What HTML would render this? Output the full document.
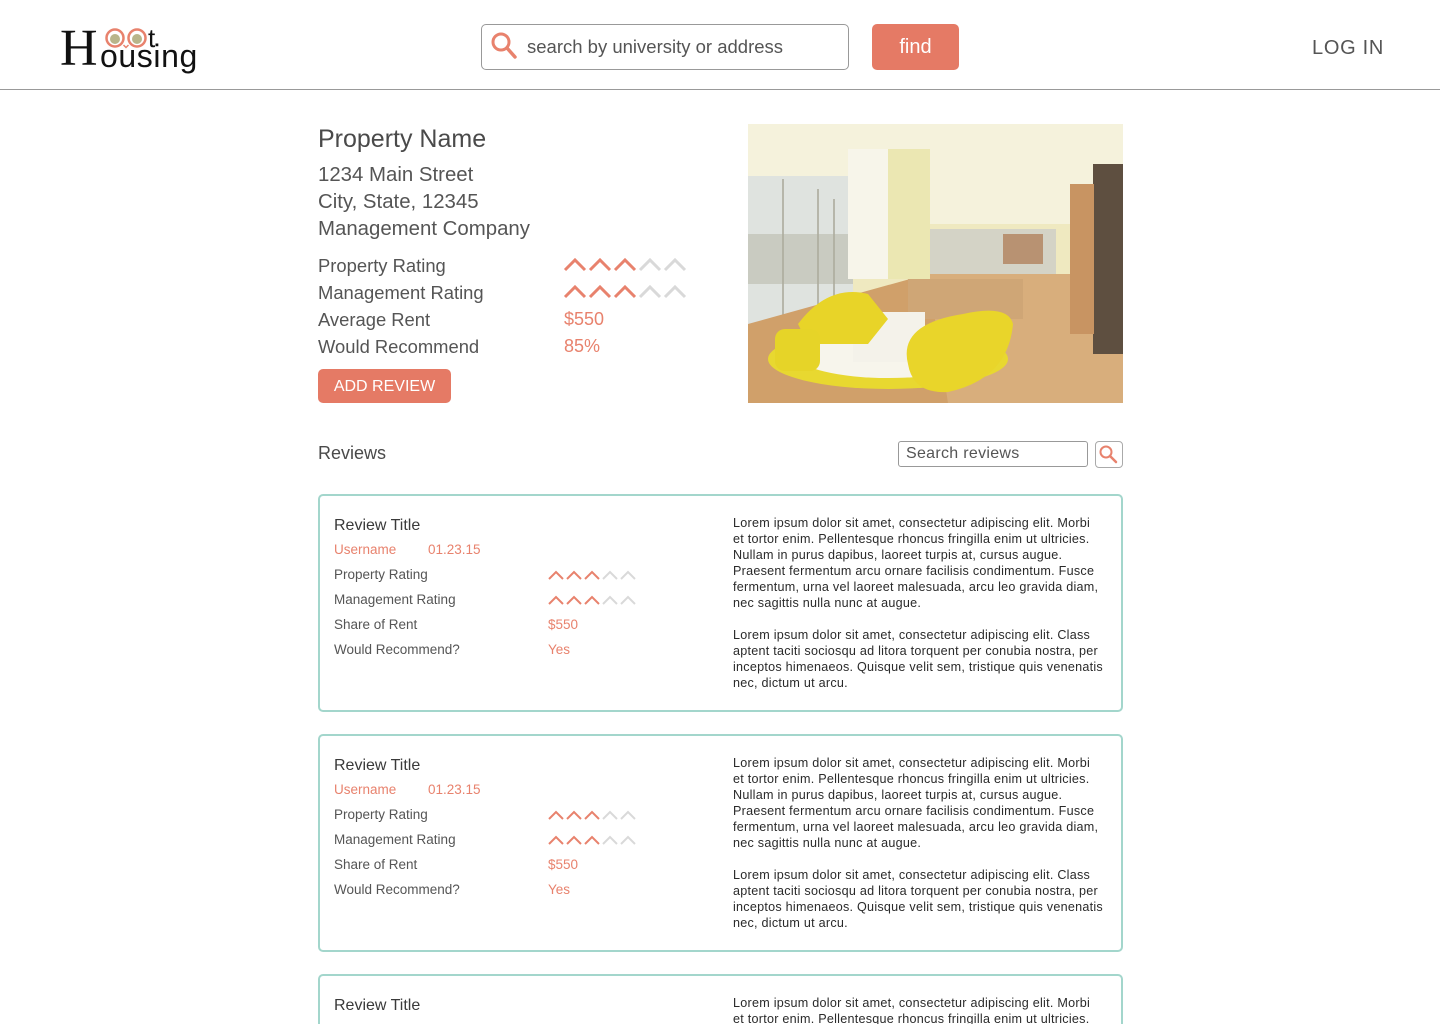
<!DOCTYPE html>
<html><head><meta charset="utf-8"><style>
*{margin:0;padding:0;box-sizing:border-box}
html{height:1024px;overflow:hidden}
body{width:1440px;height:1024px;overflow:hidden;background:#fff;font-family:"Liberation Sans",sans-serif;color:#4a4a4a;position:relative}
.a{position:absolute;white-space:nowrap}
.o{color:#e8826d}
.card{position:absolute;left:318px;width:805px;height:218px;border:2px solid #a3d6cc;border-radius:5px;overflow:hidden}
.card .a{font-size:13.5px;color:#555}
.card .t{font-size:16px;color:#3a3a3a}
.card .o{color:#e8826d}
.card .p{left:413px;top:19px;font-size:12.6px;letter-spacing:0.25px;line-height:16px;color:#2a2a2a}
</style></head><body>
<!-- header -->
<div class="a" style="left:62px;top:20px;width:150px;height:60px">
<div class="a" style="left:-2px;top:3px;font-family:'Liberation Serif',serif;font-size:52px;color:#111;line-height:52px">H</div>
<svg class="a" style="left:41px;top:6px" width="90" height="24"><circle cx="12" cy="12" r="8.5" fill="none" stroke="#e8826d" stroke-width="2.5"/><circle cx="12" cy="13" r="5" fill="#b9b58a"/><circle cx="34" cy="12" r="8.5" fill="none" stroke="#e8826d" stroke-width="2.5"/><circle cx="34" cy="13" r="5" fill="#b9b58a"/><path d="M20.5 19 l2.5 2.5 l2.5 -2.5" stroke="#e8826d" fill="none" stroke-width="1.5"/></svg>
<div class="a" style="left:86px;top:3px;font-size:26px;color:#111">t</div>
<div class="a" style="left:38px;top:18px;font-size:32px;color:#111;letter-spacing:0.6px">ousing</div>
</div>
<div class="a" style="left:481px;top:24px;width:368px;height:46px;border:1px solid #999;border-radius:5px"></div>
<svg class="a" style="left:490px;top:31px" width="28" height="30"><circle cx="11" cy="11" r="8" fill="none" stroke="#e8826d" stroke-width="3"/><path d="M17 17 L25 26" stroke="#e8826d" stroke-width="3.5" stroke-linecap="round"/></svg>
<div class="a" style="left:527px;top:36px;font-size:18.5px;color:#555">search by university or address</div>
<div class="a" style="left:872px;top:24px;width:87px;height:46px;background:#e57a65;border-radius:5px;color:#fff;font-size:20px;text-align:center;line-height:46px">find</div>
<div class="a" style="left:1312px;top:37px;font-size:20px;color:#555;letter-spacing:0.7px">LOG IN</div>
<div class="a" style="left:0;top:89px;width:1440px;height:1px;background:#999"></div>

<!-- property -->
<div class="a" style="left:318px;top:125px;font-size:25px;color:#4a4a4a">Property Name</div>
<div class="a" style="left:318px;top:162px;font-size:20.4px;line-height:27px;color:#555">1234 Main Street<br>City, State, 12345<br>Management Company</div>
<div class="a" style="left:318px;top:252px;font-size:18.4px;line-height:27px;color:#555">Property Rating<br>Management Rating<br>Average Rent<br>Would Recommend</div>
<svg class="a" style="left:562px;top:256px" width="130" height="45">
<g fill="none" stroke-width="3"><g stroke="#e8826d"><path d="M3 14 L13 4 L23 14M28 14 L38 4 L48 14M53 14 L63 4 L73 14"/><path d="M3 41 L13 31 L23 41M28 41 L38 31 L48 41M53 41 L63 31 L73 41"/></g><g stroke="#d9d9d9"><path d="M78 14 L88 4 L98 14M103 14 L113 4 L123 14"/><path d="M78 41 L88 31 L98 41M103 41 L113 31 L123 41"/></g></g></svg>
<div class="a o" style="left:564px;top:306px;font-size:18px;line-height:27px">$550<br>85%</div>
<div class="a" style="left:318px;top:369px;width:133px;height:34px;background:#e57a65;border-radius:5px;color:#fff;font-size:16px;text-align:center;line-height:35px">ADD REVIEW</div>

<svg class="a" style="left:748px;top:124px" width="375" height="279" viewBox="0 0 375 279">
<rect width="375" height="279" fill="#efe9c0"/>
<rect y="0" width="375" height="100" fill="#f5f2dc"/>
<rect x="0" y="52" width="105" height="160" fill="#dfe3df"/>
<g stroke="#a8a898" stroke-width="1.5"><path d="M35 55 V205M70 65 V200M86 75V195"/></g>
<rect x="0" y="110" width="105" height="50" fill="#b0ae9e" opacity=".45"/>
<rect x="178" y="105" width="130" height="50" fill="#d4d3c6"/>
<rect x="255" y="110" width="40" height="30" fill="#b89272"/>
<path d="M0 200 L180 150 L330 150 L375 200 V279 H0Z" fill="#d0a06a"/>
<path d="M180 150 L330 150 L375 230 V279 H200Z" fill="#d8ae7c"/>
<rect x="100" y="25" width="80" height="130" fill="#f7f5ea"/>
<rect x="140" y="25" width="42" height="130" fill="#ebe7b2"/>
<rect x="345" y="40" width="30" height="190" fill="#5e4f40"/>
<rect x="322" y="60" width="24" height="150" fill="#c89462"/>
<rect x="160" y="155" width="115" height="40" fill="#cfa676"/>
<ellipse cx="140" cy="235" rx="120" ry="30" fill="#e8d830"/>
<ellipse cx="140" cy="232" rx="90" ry="22" fill="#f7f5ec"/>
<rect x="105" y="188" width="72" height="50" fill="#f4f2ea"/>
<path d="M50 200 Q80 160 120 170 L140 195 L120 220 L60 220Z" fill="#e8d428"/>
<rect x="27" y="205" width="45" height="42" rx="10" fill="#e6d428"/>
<path d="M160 240 Q150 200 215 190 Q260 180 265 200 Q260 255 200 268 Q165 270 160 240Z" fill="#e9d52a"/>
</svg>

<!-- reviews header -->
<div class="a" style="left:318px;top:443px;font-size:18px;color:#4a4a4a">Reviews</div>
<div class="a" style="left:898px;top:441px;width:190px;height:26px;border:1px solid #999;border-radius:3px"></div>
<div class="a" style="left:906px;top:445px;font-size:16px;color:#555;letter-spacing:0.3px">Search reviews</div>
<div class="a" style="left:1095px;top:441px;width:28px;height:27px;border:1px solid #aaa;border-radius:4px"></div>
<svg class="a" style="left:1098px;top:444px" width="22" height="22"><circle cx="8" cy="8" r="5.5" fill="none" stroke="#e8826d" stroke-width="2"/><path d="M12 12 L18 18" stroke="#e8826d" stroke-width="2.5" stroke-linecap="round"/></svg>

<!-- cards -->
<div class="card" style="top:494px">
<div class="a t" style="left:14px;top:21px">Review Title</div>
<div class="a o" style="left:14px;top:46px">Username</div><div class="a o" style="left:108px;top:46px">01.23.15</div>
<div class="a" style="left:14px;top:66px;line-height:25px">Property Rating<br>Management Rating<br>Share of Rent<br>Would Recommend?</div>
<div class="a o" style="left:228px;top:116px;line-height:25px">$550<br>Yes</div>
<svg class="a" style="left:227px;top:74px" width="92" height="36"><g fill="none" stroke-width="2"><g stroke="#e8826d"><path d="M2 9 L9 2 L16 9M20 9 L27 2 L34 9M38 9 L45 2 L52 9M2 34 L9 27 L16 34M20 34 L27 27 L34 34M38 34 L45 27 L52 34"/></g><g stroke="#d9d9d9"><path d="M56 9 L63 2 L70 9M74 9 L81 2 L88 9M56 34 L63 27 L70 34M74 34 L81 27 L88 34"/></g></g></svg>
<div class="a p">Lorem ipsum dolor sit amet, consectetur adipiscing elit. Morbi<br>et tortor enim. Pellentesque rhoncus fringilla enim ut ultricies.<br>Nullam in purus dapibus, laoreet turpis at, cursus augue.<br>Praesent fermentum arcu ornare facilisis condimentum. Fusce<br>fermentum, urna vel laoreet malesuada, arcu leo gravida diam,<br>nec sagittis nulla nunc at augue.<br><br>Lorem ipsum dolor sit amet, consectetur adipiscing elit. Class<br>aptent taciti sociosqu ad litora torquent per conubia nostra, per<br>inceptos himenaeos. Quisque velit sem, tristique quis venenatis<br>nec, dictum ut arcu.</div>
</div>
<div class="card" style="top:734px">
<div class="a t" style="left:14px;top:21px">Review Title</div>
<div class="a o" style="left:14px;top:46px">Username</div><div class="a o" style="left:108px;top:46px">01.23.15</div>
<div class="a" style="left:14px;top:66px;line-height:25px">Property Rating<br>Management Rating<br>Share of Rent<br>Would Recommend?</div>
<div class="a o" style="left:228px;top:116px;line-height:25px">$550<br>Yes</div>
<svg class="a" style="left:227px;top:74px" width="92" height="36"><g fill="none" stroke-width="2"><g stroke="#e8826d"><path d="M2 9 L9 2 L16 9M20 9 L27 2 L34 9M38 9 L45 2 L52 9M2 34 L9 27 L16 34M20 34 L27 27 L34 34M38 34 L45 27 L52 34"/></g><g stroke="#d9d9d9"><path d="M56 9 L63 2 L70 9M74 9 L81 2 L88 9M56 34 L63 27 L70 34M74 34 L81 27 L88 34"/></g></g></svg>
<div class="a p">Lorem ipsum dolor sit amet, consectetur adipiscing elit. Morbi<br>et tortor enim. Pellentesque rhoncus fringilla enim ut ultricies.<br>Nullam in purus dapibus, laoreet turpis at, cursus augue.<br>Praesent fermentum arcu ornare facilisis condimentum. Fusce<br>fermentum, urna vel laoreet malesuada, arcu leo gravida diam,<br>nec sagittis nulla nunc at augue.<br><br>Lorem ipsum dolor sit amet, consectetur adipiscing elit. Class<br>aptent taciti sociosqu ad litora torquent per conubia nostra, per<br>inceptos himenaeos. Quisque velit sem, tristique quis venenatis<br>nec, dictum ut arcu.</div>
</div>
<div class="card" style="top:974px;height:60px">
<div class="a t" style="left:14px;top:21px">Review Title</div>
<div class="a p">Lorem ipsum dolor sit amet, consectetur adipiscing elit. Morbi<br>et tortor enim. Pellentesque rhoncus fringilla enim ut ultricies.</div>
</div>
</body></html>
